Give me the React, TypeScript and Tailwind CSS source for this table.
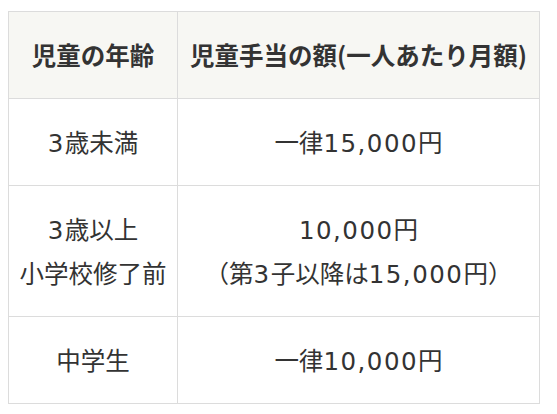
import React from "react";

const rows: { age: string[]; amount: string[] }[] = [
  { age: ["3歳未満"], amount: ["一律15,000円"] },
  { age: ["3歳以上", "小学校修了前"], amount: ["10,000円", "（第3子以降は15,000円）"] },
  { age: ["中学生"], amount: ["一律10,000円"] },
];

function Txt({ text }: { text: string }) {
  const parts = text.split(/([0-9,]+)/);
  return (
    <div className="h-[44px]">
      {parts.map((p, i) =>
        /^[0-9,]+$/.test(p) ? (
          <span
            key={i}
            className="tracking-[1.5px] leading-none"
            style={{ fontFamily: '"DejaVu Sans", sans-serif' }}
          >
            {p}
          </span>
        ) : (
          <span key={i}>{p}</span>
        )
      )}
    </div>
  );
}

export default function App() {
  return (
    <div
      className="w-[557px] h-[414px] bg-white pt-[11px] pl-[8px]"
      style={{ fontFamily: '"Noto Sans CJK JP", "Noto Sans", sans-serif' }}
    >
      <table className="border-collapse w-[532px] text-[#333] text-[24.5px] leading-[44px] text-center">
        <thead>
          <tr className="bg-[#f7f7f3]">
            <th className="w-[169px] border border-[#dcdcdc] py-[21px] font-semibold">児童の年齢</th>
            <th className="border border-[#dcdcdc] py-[21px] font-semibold">児童手当の額(一人あたり月額)</th>
          </tr>
        </thead>
        <tbody>
          {rows.map((r, i) => (
            <tr key={i}>
              <td className="border border-[#dcdcdc] py-[21px]">
                {r.age.map((t, j) => (
                  <Txt key={j} text={t} />
                ))}
              </td>
              <td className="border border-[#dcdcdc] py-[21px]">
                {r.amount.map((t, j) => (
                  <Txt key={j} text={t} />
                ))}
              </td>
            </tr>
          ))}
        </tbody>
      </table>
    </div>
  );
}
